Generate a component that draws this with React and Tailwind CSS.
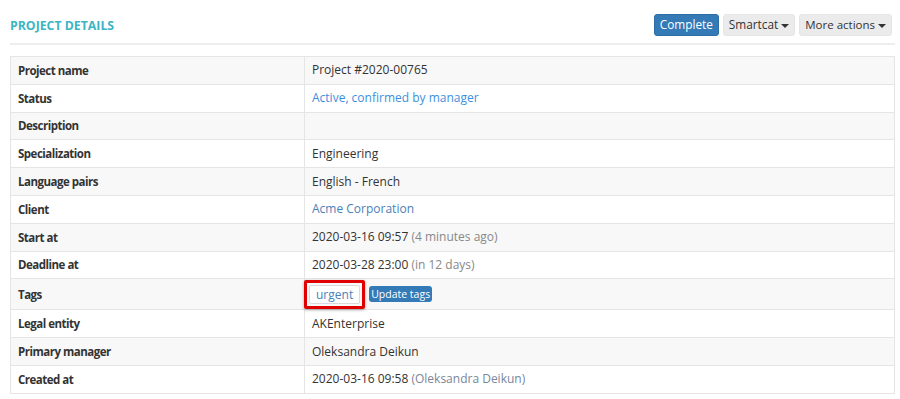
const rows = [
  { label: "Project name", value: <span>Project #2020-00765</span> },
  { label: "Status", value: <span className="text-[#3d8fdc]">Active, confirmed by manager</span> },
  { label: "Description", value: null },
  { label: "Specialization", value: <span>Engineering</span> },
  { label: "Language pairs", value: <span>English - French</span> },
  { label: "Client", value: <span className="text-[#4a7fb8]">Acme Corporation</span> },
  {
    label: "Start at",
    value: (
      <span>
        2020-03-16 09:57 <span className="text-[#888]">(4 minutes ago)</span>
      </span>
    ),
  },
  {
    label: "Deadline at",
    value: (
      <span>
        2020-03-28 23:00 <span className="text-[#888]">(in 12 days)</span>
      </span>
    ),
  },
  { label: "Tags", tags: true },
  { label: "Legal entity", value: <span>AKEnterprise</span> },
  { label: "Primary manager", value: <span>Oleksandra Deikun</span> },
  {
    label: "Created at",
    value: (
      <span>
        2020-03-16 09:58 <span className="text-[#7a8699]">(Oleksandra Deikun)</span>
      </span>
    ),
  },
];

function Caret() {
  return <span className="ml-[3px] inline-block border-x-[4px] border-t-[4px] border-x-transparent border-t-[#333] align-middle" />;
}

export default function App() {
  return (
    <div className="bg-white pl-[10px] pr-[5px] pt-[14px] text-[#333]" style={{ fontFamily: '"Open Sans", sans-serif' }}>
      <div className="flex items-center justify-between pb-[7px] border-b-2 border-[#eeeeee] pr-[3px]">
        <h2 className="pt-[2px] text-[12.3px] font-bold uppercase text-[#3bb5c3]">Project details</h2>
        <div className="flex gap-[4px]">
          <button className="h-[22px] rounded-[3px] border border-[#2e6da4] bg-[#337ab7] px-[5px] text-[11.8px] text-white">
            Complete
          </button>
          <button className="h-[22px] rounded-[3px] border border-[#e6e6e6] bg-[#ebebeb] px-[5px] text-[11.8px] text-[#333]">
            Smartcat
            <Caret />
          </button>
          <button className="h-[22px] rounded-[3px] border border-[#e6e6e6] bg-[#ebebeb] px-[5px] text-[11.5px] text-[#333]">
            More actions
            <Caret />
          </button>
        </div>
      </div>

      <table className="mt-[11px] w-full border-collapse border border-[#e5e5e5] text-[12px]">
        <tbody>
          {rows.map((r, i) => (
            <tr key={r.label} className={i % 2 === 0 ? "bg-[#f8f8f8]" : "bg-white"}>
              <td className="w-[294px] border border-[#e5e5e5] px-[7px] h-[27.8px] text-[11.5px] font-bold tracking-[-0.5px] text-[#333]">
                {r.label}
              </td>
              <td className={"border border-[#e5e5e5] px-[7px] " + (r.tags ? "h-[31px]" : "h-[27.8px]")}>
                {r.tags ? (
                  <div className="flex items-center gap-[4px]">
                    <div className="-ml-[8px] rounded-[2px] border-[3px] border-[#e00000] p-[2px] shadow-[0_1px_3px_rgba(0,0,0,0.35)]">
                      <span className="block rounded-[2px] border border-[#dadada] bg-white px-[6px] text-[12px] leading-[17px] text-[#4a7fb8]">
                        urgent
                      </span>
                    </div>
                    <button className="rounded-[3px] bg-[#337ab7] px-[2px] text-[10.5px] leading-[16px] text-white">
                      Update tags
                    </button>
                  </div>
                ) : (
                  r.value
                )}
              </td>
            </tr>
          ))}
        </tbody>
      </table>
    </div>
  );
}
